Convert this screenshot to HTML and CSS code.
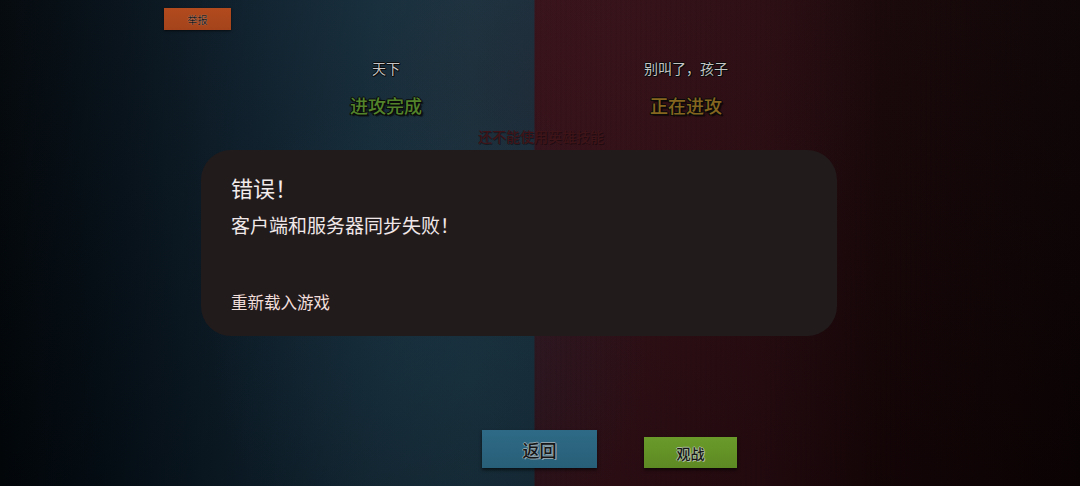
FILE: index.html
```html
<!DOCTYPE html>
<html lang="zh-CN">
<head>
<meta charset="utf-8">
<title>对战</title>
<link rel="stylesheet" href="styles.css">
</head>
<body>
<div class="screen">
  <div class="topbar">
    <button class="btn btn-report">举报</button>
  </div>

  <div class="teams">
    <div class="team">
      <div class="team-name">天下</div>
      <div class="team-status status-done">进攻完成</div>
    </div>
    <div class="team">
      <div class="team-name">别叫了，孩子</div>
      <div class="team-status status-busy">正在进攻</div>
    </div>
  </div>

  <div class="hint">还不能使用英雄技能</div>

  <div class="actions">
    <button class="btn btn-back">返回</button>
    <button class="btn btn-watch">观战</button>
  </div>

  <div class="dialog">
    <div class="dialog-title">错误！</div>
    <div class="dialog-message">客户端和服务器同步失败！</div>
    <div class="dialog-action">重新载入游戏</div>
  </div>
</div>
</body>
</html>
```

FILE: styles.css
```css
* {
  box-sizing: border-box;
}

html,
body {
  margin: 0;
  padding: 0;
  background: #000;
}

body {
  font-family: "Noto Sans CJK SC", "Noto Sans", sans-serif;
}

.screen {
  position: relative;
  width: 1080px;
  height: 486px;
  overflow: hidden;
  display: flex;
  flex-direction: column;
  background:
    radial-gradient(ellipse 220px 260px at 430px 330px, rgba(30, 62, 80, 0.3), rgba(30, 62, 80, 0) 100%),
    radial-gradient(ellipse 260px 240px at 620px 80px, rgba(60, 16, 24, 0.2), rgba(60, 16, 24, 0) 100%),
    linear-gradient(to bottom, rgba(255, 255, 255, 0.015), rgba(0, 0, 0, 0.2)),
    linear-gradient(to right,
      #02070b 0,
      #06111a 120px,
      #0e202d 250px,
      #162d3b 380px,
      #19323f 470px,
      #18303e 534px,
      #37111a 535px,
      #341018 620px,
      #2a0c12 760px,
      #180608 880px,
      #0c0304 1080px);
}

/* faint vertical grain on the red side */
.screen::before {
  content: "";
  position: absolute;
  top: 0;
  bottom: 0;
  left: 535px;
  right: 0;
  background: repeating-linear-gradient(to right, rgba(0, 0, 0, 0.035) 0 2px, rgba(0, 0, 0, 0) 2px 5px);
  pointer-events: none;
}

.btn {
  font-family: "Noto Sans CJK SC", sans-serif;
  border: none;
  padding: 0;
  display: flex;
  align-items: center;
  justify-content: center;
  color: #161616;
  cursor: pointer;
}

.topbar {
  position: relative;
  display: flex;
  padding: 8px 0 0 164px;
}

.btn-report {
  width: 67px;
  height: 22px;
  font-size: 10px;
  background: linear-gradient(to bottom, #b24b1e, #a4431b);
  box-shadow: 0 1px 2px rgba(0, 0, 0, 0.6);
  text-shadow: 0 0 1px rgba(220, 200, 190, 0.9);
}

.teams {
  position: relative;
  display: grid;
  grid-template-columns: 300px 300px;
  margin: 28px 0 0 236px;
}

.team {
  display: flex;
  flex-direction: column;
  align-items: center;
  gap: 15px;
}

.team-name {
  font-size: 14px;
  line-height: 20px;
  color: #c4c4c4;
  text-shadow:
    1px 1px 0 #0c0c0c,
    -1px 0 0 #0c0c0c,
    0 -1px 0 #0c0c0c,
    1px 0 0 #0c0c0c,
    0 1px 0 #0c0c0c;
}

.team-status {
  font-size: 18px;
  line-height: 24px;
  font-weight: 500;
  text-shadow:
    1px 1px 0 #0a0a0a,
    -1px 0 0 #0a0a0a,
    0 -1px 0 #0a0a0a,
    1px 0 0 #0a0a0a,
    -1px 1px 0 #0a0a0a,
    2px 2px 1px rgba(0, 0, 0, 0.6);
}

.status-done {
  color: #52832a;
}

.status-busy {
  color: #85661f;
}

.hint {
  position: relative;
  align-self: center;
  margin: 9px 0 0 2px;
  font-size: 14px;
  line-height: 20px;
  font-weight: 500;
  color: #3e1418;
  text-shadow: 1px 1px 0 rgba(10, 4, 6, 0.45);
}

.actions {
  position: relative;
  margin-top: auto;
  padding: 0 0 18px 482px;
  display: flex;
  align-items: flex-end;
  gap: 47px;
}

.btn-back {
  width: 115px;
  height: 38px;
  font-size: 17px;
  font-weight: 500;
  background: linear-gradient(to bottom, #2e6a86, #285f78);
  box-shadow: 0 2px 3px rgba(0, 0, 0, 0.6);
  text-shadow:
    1px 1px 0 #8ea2ab,
    -1px 0 0 #8ea2ab,
    0 -1px 0 #8ea2ab,
    1px 0 0 #8ea2ab;
}

.btn-watch {
  width: 93px;
  height: 31px;
  font-size: 14px;
  font-weight: 500;
  background: linear-gradient(to bottom, #6a9a2a, #5d8a23);
  box-shadow: 0 2px 3px rgba(0, 0, 0, 0.6);
  text-shadow:
    1px 1px 0 #aab99c,
    -1px 0 0 #aab99c,
    0 -1px 0 #aab99c,
    1px 0 0 #aab99c;
}

/* modal error box over the game screen */
.dialog {
  position: absolute;
  left: 201px;
  top: 150px;
  width: 636px;
  height: 186px;
  border-radius: 30px;
  background: #221b1c;
  padding: 22px 30px 22px 30px;
  display: flex;
  flex-direction: column;
}

.dialog-title {
  font-size: 22px;
  line-height: 30px;
  color: #f3ecec;
}

.dialog-message {
  margin-top: 10px;
  font-size: 19px;
  line-height: 26px;
  color: #f0e8e8;
}

.dialog-action {
  margin-top: auto;
  font-size: 16.5px;
  line-height: 24px;
  color: #f2dfdb;
}
```
